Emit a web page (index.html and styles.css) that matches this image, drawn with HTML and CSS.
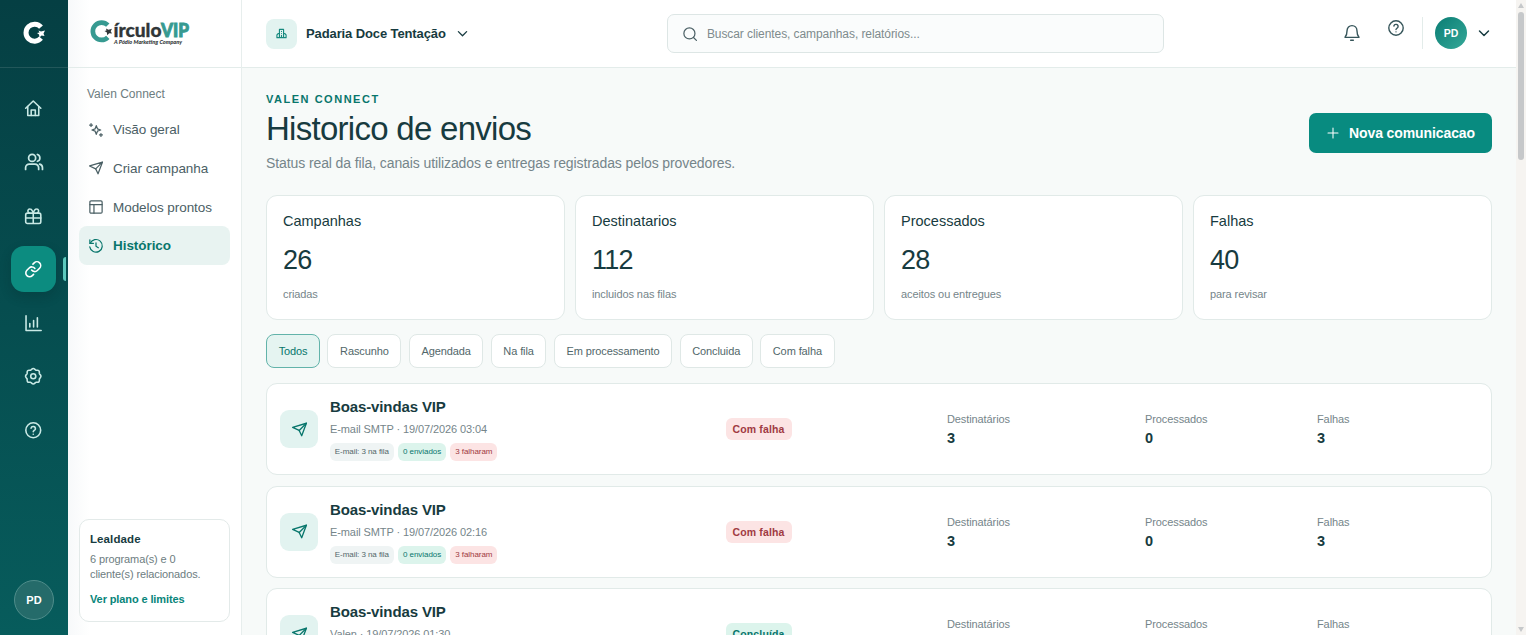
FILE: index.html
```html
<!DOCTYPE html>
<html lang="pt-BR">
<head>
    <meta charset="UTF-8">
    <title>Historico de envios</title>
    <link rel="stylesheet" href="styles.css">
</head>
<body>
    <!-- shared icons -->
    <svg class="sprite" aria-hidden="true">
        <symbol id="i-send" viewBox="0 0 24 24"><path d="M23 2 15.500 22l-4-8.500-10.500-5Z"/><path d="M23 2 11.500 13.500"/></symbol>
        <symbol id="i-help" viewBox="0 0 24 24"><circle cx="12" cy="12" r="10.800"/><path d="M8.800 9a3.200 3.200 0 0 1 6.300 1c0 2-3.100 2.600-3.100 4.200"/><path d="M12 17.800h.01"/></symbol>
        <symbol id="i-chevron" viewBox="0 0 24 24"><path d="m3 8 9 9 9-9"/></symbol>
    </svg>

    <aside class="rail">
        <div class="rail-logo">
            <svg width="24" height="24" viewBox="0 0 24 24" fill="none">
                <path d="M19 6.200A8.500 8.500 0 1 0 19 17.200" stroke="#fff" stroke-width="5"/>
                <path d="m16.500 9.500 2.500 1 4-1-1.500 3 1 2.500-3-.5-2 2-.5-3-2-1.500 2.500-.5Z" fill="#fff"/>
            </svg>
        </div>
        <nav class="rail-nav">
            <a class="rail-item"><svg class="icon" viewBox="0 0 24 24"><path d="M1 12 12 1.500 23 12"/><path d="M4 9.500V22.500h16V9.500"/><path d="M9 22.500V14.500h6v8"/></svg></a>
            <a class="rail-item"><svg class="icon wide" viewBox="0 0 24 24"><circle cx="9.500" cy="6.500" r="4.700"/><path d="M.8 22v-2.300A5 5 0 0 1 5.800 14.700h7.400a5 5 0 0 1 5 5v2.300"/><path d="M16.500 2a4.700 4.700 0 0 1 0 9"/><path d="M19.500 14.900a5 5 0 0 1 3.800 4.800v2.300"/></svg></a>
            <a class="rail-item"><svg class="icon" viewBox="0 0 24 24"><rect x="1" y="7.500" width="22" height="15" rx="2.500"/><path d="M1 14.500h22M12 7.500V22"/><path d="M12 7.500C11 4 9.500 1.500 7.300 1.500a2.900 2.900 0 0 0-1.500 5.500M12 7.500C13 4 14.500 1.500 16.700 1.500a2.900 2.900 0 0 1 1.500 5.500"/></svg></a>
            <a class="rail-item active"><svg class="icon" viewBox="0 0 24 24"><path d="M9.600 13.200a5.500 5.500 0 0 0 8.300.6l3.300-3.300a5.500 5.500 0 0 0-7.800-7.800l-1.900 1.900"/><path d="M14.400 10.800a5.500 5.500 0 0 0-8.300-.6l-3.300 3.300a5.500 5.500 0 0 0 7.800 7.800l1.900-1.900"/></svg></a>
            <a class="rail-item"><svg class="icon" viewBox="0 0 24 24"><path d="M1.500 1v21.500H23.500"/><path d="M7 17.500v-5M12.500 17.500V8M18 17.500V4"/></svg></a>
            <a class="rail-item"><svg class="icon" viewBox="0 0 24 24"><path d="M12 .8c1.900 0 2.400 1.800 3.900 2.400 1.500.5 3-.5 4.300.8s.3 2.800.8 4.300c.6 1.400 2.200 1.800 2.200 3.700s-1.600 2.400-2.200 3.800c-.5 1.500.5 3-.8 4.300s-2.800.3-4.300.8c-1.500.6-2 2.400-3.900 2.400s-2.400-1.800-3.900-2.400c-1.500-.5-3 .5-4.300-.8s-.3-2.800-.8-4.300C2.400 14.400.8 13.900.8 12s1.600-2.300 2.200-3.700c.5-1.500-.5-3 .8-4.300s2.800-.3 4.300-.8C9.600 2.600 10.100.8 12 .8Z"/><circle cx="12" cy="12" r="3.700"/></svg></a>
            <a class="rail-item"><svg class="icon"><use href="#i-help"/></svg></a>
        </nav>
        <div class="rail-avatar">PD</div>
    </aside>

    <aside class="sidebar">
        <div class="brand">
            <svg width="102" height="30" viewBox="0 0 102 30">
                <path d="M18.800 6.200A8.700 8.700 0 1 0 18.800 18.300" fill="none" stroke="#379a91" stroke-width="4.700"/>
                <path d="m17 9.500 2.500 1.200 3.500-1-1.300 2.600 1.300 2.200-2.800-.3-2 2-.3-2.800-2.400-1.400 2-.6Z" fill="#303638"/>
                <text class="brand-dark" x="24.500" y="18" textLength="48" lengthAdjust="spacingAndGlyphs">írculo</text>
                <text class="brand-vip" x="72" y="18" textLength="28" lengthAdjust="spacingAndGlyphs">VIP</text>
                <text class="brand-tag" x="25" y="25" textLength="68" lengthAdjust="spacingAndGlyphs">A Pódio Marketing Company</text>
            </svg>
        </div>
        <div class="menu">
            <div class="menu-title">Valen Connect</div>
            <a class="menu-item"><svg class="icon" viewBox="0 0 24 24"><path d="m12.500 4.500 2 5.500 5.500 2-5.500 2-2 5.500-2-5.500L5 12l5.500-2Z"/><path d="M3.500 1v5M1 3.500h5M20.500 18v5M18 20.500h5"/></svg>Visão geral</a>
            <a class="menu-item"><svg class="icon"><use href="#i-send"/></svg>Criar campanha</a>
            <a class="menu-item"><svg class="icon" viewBox="0 0 24 24"><rect x="1.500" y="1.500" width="21" height="21" rx="2"/><path d="M1.500 8h21M8.500 8v14.500"/></svg>Modelos prontos</a>
            <a class="menu-item active"><svg class="icon" viewBox="0 0 24 24"><path d="M1.500 1.500V7.500h6"/><path d="M2 7.500A10.800 10.800 0 1 1 1.300 13.500"/><path d="M12 6.500v6l4 2.500"/></svg>Histórico</a>
        </div>
        <div class="plan">
            <div class="plan-title">Lealdade</div>
            <div class="plan-text">6 programa(s) e 0 cliente(s) relacionados.</div>
            <a class="plan-link">Ver plano e limites</a>
        </div>
    </aside>

    <div class="page">
        <header class="topbar">
            <div class="company">
                <span class="company-icon"><svg class="icon" viewBox="0 0 24 24"><path d="M7.500 21V3h9v18M7.500 12H5l-3 3v6h20v-6l-3-3h-2.500M12 7.500v.1M12 12v.1M12 16v5"/></svg></span>
                <span class="company-name">Padaria Doce Tentação</span>
                <svg class="icon chevron"><use href="#i-chevron"/></svg>
            </div>
            <div class="search">
                <svg class="icon" viewBox="0 0 24 24"><circle cx="11" cy="11" r="9.500"/><path d="m18 18 5 5"/></svg>
                <span>Buscar clientes, campanhas, relatórios...</span>
            </div>
            <div class="actions">
                <svg class="icon bell" viewBox="0 0 24 24"><path d="M1.500 18.500c2.500-2.500 3-5 3-9.500C4.500 4 8 1 12 1s7.500 3 7.500 8c0 4.500.5 7 3 9.500Z"/><path d="M10 22.800h4"/></svg>
                <svg class="icon help"><use href="#i-help"/></svg>
                <div class="user">
                    <span class="user-avatar">PD</span>
                    <svg class="icon"><use href="#i-chevron"/></svg>
                </div>
            </div>
        </header>

        <main class="content">
            <div class="heading">
                <div class="heading-text">
                    <div class="eyebrow">VALEN CONNECT</div>
                    <h1>Historico de envios</h1>
                    <p>Status real da fila, canais utilizados e entregas registradas pelos provedores.</p>
                </div>
                <button class="btn-new"><svg class="icon" viewBox="0 0 24 24"><path d="M12 2v20M2 12h20"/></svg>Nova comunicacao</button>
            </div>

            <section class="stats">
                <div class="stat"><span>Campanhas</span><strong>26</strong><small>criadas</small></div>
                <div class="stat"><span>Destinatarios</span><strong>112</strong><small>incluidos nas filas</small></div>
                <div class="stat"><span>Processados</span><strong>28</strong><small>aceitos ou entregues</small></div>
                <div class="stat"><span>Falhas</span><strong>40</strong><small>para revisar</small></div>
            </section>

            <div class="filters">
                <button class="filter active">Todos</button>
                <button class="filter">Rascunho</button>
                <button class="filter">Agendada</button>
                <button class="filter">Na fila</button>
                <button class="filter">Em processamento</button>
                <button class="filter">Concluida</button>
                <button class="filter">Com falha</button>
            </div>

            <section class="list">
                <article class="row">
                    <div class="row-icon"><svg class="icon"><use href="#i-send"/></svg></div>
                    <div class="row-info">
                        <h3>Boas-vindas VIP</h3>
                        <p>E-mail SMTP · 19/07/2026 03:04</p>
                        <div class="tags"><span class="tag">E-mail: 3 na fila</span><span class="tag ok">0 enviados</span><span class="tag error">3 falharam</span></div>
                    </div>
                    <div><span class="status error">Com falha</span></div>
                    <div class="metric"><span>Destinatários</span><strong>3</strong></div>
                    <div class="metric"><span>Processados</span><strong>0</strong></div>
                    <div class="metric"><span>Falhas</span><strong>3</strong></div>
                </article>
                <article class="row">
                    <div class="row-icon"><svg class="icon"><use href="#i-send"/></svg></div>
                    <div class="row-info">
                        <h3>Boas-vindas VIP</h3>
                        <p>E-mail SMTP · 19/07/2026 02:16</p>
                        <div class="tags"><span class="tag">E-mail: 3 na fila</span><span class="tag ok">0 enviados</span><span class="tag error">3 falharam</span></div>
                    </div>
                    <div><span class="status error">Com falha</span></div>
                    <div class="metric"><span>Destinatários</span><strong>3</strong></div>
                    <div class="metric"><span>Processados</span><strong>0</strong></div>
                    <div class="metric"><span>Falhas</span><strong>3</strong></div>
                </article>
                <article class="row">
                    <div class="row-icon"><svg class="icon"><use href="#i-send"/></svg></div>
                    <div class="row-info">
                        <h3>Boas-vindas VIP</h3>
                        <p>Valen · 19/07/2026 01:30</p>
                        <div class="tags"><span class="tag ok">1 enviados</span></div>
                    </div>
                    <div><span class="status ok">Concluída</span></div>
                    <div class="metric"><span>Destinatários</span><strong>1</strong></div>
                    <div class="metric"><span>Processados</span><strong>1</strong></div>
                    <div class="metric"><span>Falhas</span><strong>0</strong></div>
                </article>
            </section>
        </main>
    </div>

    <div class="scrollbar">
        <span class="arrow up"></span>
        <span class="thumb"></span>
        <span class="arrow down"></span>
    </div>
</body>
</html>
```
FILE: styles.css
```css
* {
    box-sizing: border-box;
}
body {
    display: flex;
    height: 100vh;
    margin: 0;
    overflow: hidden;
    font-family: "Liberation Sans", Arial, sans-serif;
    color: #173b40;
    background-color: #f7faf9;
}
h1, h3, p {
    margin: 0;
}
button {
    font-family: inherit;
}
.sprite {
    display: none;
}
.icon {
    width: 16px;
    height: 16px;
    flex: none;
    overflow: visible;
    fill: none;
    stroke: currentColor;
    stroke-width: 2.100;
    stroke-linecap: round;
    stroke-linejoin: round;
}
symbol {
    overflow: visible;
}

/* rail */
.rail {
    display: flex;
    flex-direction: column;
    align-items: center;
    width: 68px;
    flex: none;
    padding-bottom: 15px;
    background: linear-gradient(#053f43, #075c5c);
}
.rail-logo {
    display: flex;
    align-items: center;
    justify-content: center;
    width: 100%;
    height: 68px;
    padding: 0 1px 1px 0;
    border-bottom: 1px solid #22575a;
}
.rail-nav {
    display: flex;
    flex-direction: column;
    gap: 7.600px;
    margin: 17.600px 1px 0 0;
}
.rail-item {
    display: flex;
    align-items: center;
    justify-content: center;
    position: relative;
    width: 45px;
    height: 46px;
    border-radius: 13px;
    color: #c9e9e5;
}
.rail-item .icon {
    width: 16.500px;
    height: 16.500px;
    stroke-width: 2.300;
}
.rail-item .icon.wide {
    width: 18px;
    height: 18px;
}
.rail-item.active {
    color: #fff;
    background-color: #0c8c80;
    box-shadow: 0 5px 12px rgba(0, 30, 30, 0.2);
}
.rail-item.active::after {
    content: "";
    position: absolute;
    top: 11px;
    right: -10px;
    width: 3px;
    height: 24px;
    border-radius: 3px 0 0 3px;
    background-color: #5cc9bd;
}
.rail-avatar {
    width: 40px;
    height: 40px;
    margin-top: auto;
    border: 1px solid #4f8d8b;
    border-radius: 50%;
    background-color: #256b6a;
    color: #fff;
    font-size: 11px;
    font-weight: bold;
    line-height: 38px;
    text-align: center;
}

/* sidebar */
.sidebar {
    display: flex;
    flex-direction: column;
    width: 174px;
    flex: none;
    padding-bottom: 13.500px;
    border-right: 1px solid #e7eeed;
    background: linear-gradient(90deg, #f7f9fa, #fff 22px);
}
.brand {
    height: 68px;
    padding: 19px 0 0 21px;
    border-bottom: 1px solid #e3ecea;
}
.brand-dark, .brand-vip {
    font-family: Lato, sans-serif;
    font-weight: 900;
    font-size: 18px;
    fill: #303638;
    stroke: #303638;
    stroke-width: 0.300px;
}
.brand-vip {
    fill: #379a91;
    stroke: #379a91;
    stroke-width: 0.900px;
}
.brand-tag {
    font-family: Lato, sans-serif;
    font-style: italic;
    font-weight: 900;
    font-size: 5.500px;
    fill: #303638;
}
.menu {
    padding: 19px 11px 0;
}
.menu-title {
    margin-bottom: 9.300px;
    padding-left: 8px;
    font-size: 12px;
    line-height: 14px;
    color: #6d7d7f;
}
.menu-item {
    display: flex;
    align-items: center;
    gap: 10px;
    height: 38.700px;
    padding-left: 10px;
    border-radius: 8px;
    font-size: 13.500px;
    letter-spacing: -0.060px;
    color: #4b6065;
}
.menu-item .icon {
    width: 14px;
    height: 14px;
}
.menu-item.active {
    background-color: #e8f3f1;
    color: #08766c;
    font-weight: bold;
}
.plan {
    height: 102.500px;
    margin: auto 11px 0;
    padding: 12px 10px;
    border: 1px solid #e3eae9;
    border-radius: 10px;
    background-color: #fff;
    font-size: 11px;
    letter-spacing: -0.110px;
}
.plan-title {
    font-size: 11.500px;
    font-weight: bold;
    letter-spacing: 0.100px;
    line-height: 14px;
}
.plan-text {
    margin-top: 6px;
    line-height: 15px;
    color: #6d7d7f;
}
.plan-link {
    display: block;
    margin-top: 10px;
    font-weight: bold;
    line-height: 14px;
    color: #08857a;
}

/* topbar */
.page {
    flex: 1;
    min-width: 0;
}
.topbar {
    display: grid;
    grid-template-columns: 401.400px 497px 1fr;
    height: 68px;
    padding: 0 24px;
    border-bottom: 1px solid #e3ecea;
    background-color: #fff;
}
.company {
    display: flex;
    align-items: center;
}
.company-icon {
    display: flex;
    align-items: center;
    justify-content: center;
    width: 31px;
    height: 30px;
    border-radius: 8px;
    background-color: #e2f3f0;
    color: #16897e;
}
.company-icon .icon {
    width: 11px;
    height: 11px;
    stroke-width: 2.500;
}
.company-name {
    margin: 0 11px 0 9px;
    font-size: 13px;
    font-weight: bold;
    letter-spacing: -0.110px;
}
.chevron {
    width: 11px;
    height: 11px;
    stroke-width: 2.800;
}
.search {
    display: flex;
    align-items: center;
    align-self: center;
    gap: 10px;
    height: 39px;
    padding-left: 14.500px;
    border: 1px solid #dde6e5;
    border-radius: 7px;
    background-color: #fafcfc;
    font-size: 12px;
    letter-spacing: -0.080px;
    color: #7e8b8d;
}
.search .icon {
    width: 14px;
    height: 14px;
    color: #4b6065;
}
.actions {
    display: flex;
    align-items: center;
    justify-content: flex-end;
    color: #36555a;
}
.actions .icon {
    width: 16px;
    height: 16px;
}
.actions .bell {
    margin-bottom: 2px;
}
.actions .help {
    margin: 0 18px 11px 28px;
}
.user {
    display: flex;
    align-items: center;
    gap: 11px;
    height: 32px;
    margin-bottom: 1px;
    padding: 0 2px 0 12px;
    border-left: 1px solid #e3ecea;
}
.actions .user .icon {
    width: 12px;
    height: 12px;
    stroke-width: 2.900;
    color: #173b40;
}
.user-avatar {
    width: 32px;
    height: 32px;
    border-radius: 50%;
    background: linear-gradient(135deg, #0a7d74, #35a898);
    color: #fff;
    font-size: 10.500px;
    font-weight: bold;
    line-height: 32px;
    text-align: center;
}

/* content */
.content {
    padding: 24px 24px 0;
}
.heading {
    display: flex;
    align-items: center;
    justify-content: space-between;
    height: 84px;
    margin-bottom: 19px;
}
.heading-text {
    align-self: flex-start;
}
.eyebrow {
    font-size: 11px;
    font-weight: bold;
    letter-spacing: 1.520px;
    line-height: 14px;
    color: #08766c;
}
h1 {
    margin-top: 3px;
    font-size: 33px;
    font-weight: normal;
    letter-spacing: -0.720px;
    line-height: 40px;
}
.heading p {
    margin-top: 5px;
    font-size: 14px;
    letter-spacing: -0.100px;
    line-height: 18px;
    color: #75858a;
}
.btn-new {
    display: flex;
    align-items: center;
    justify-content: center;
    gap: 10px;
    width: 183px;
    height: 40px;
    margin-top: -3px;
    padding: 0 0 0 1px;
    border: 0;
    border-radius: 7px;
    background-color: #088b80;
    color: #fff;
    font-size: 14px;
    font-weight: bold;
    letter-spacing: -0.100px;
}
.btn-new .icon {
    width: 12px;
    height: 12px;
}
.stats {
    display: grid;
    grid-template-columns: repeat(4, 1fr);
    gap: 10px;
}
.stat {
    display: flex;
    flex-direction: column;
    height: 125px;
    padding: 16px;
    border: 1px solid #e1eae8;
    border-radius: 11px;
    background-color: #fff;
}
.stat span {
    font-size: 14.500px;
    line-height: 18px;
}
.stat strong {
    margin: 15px 0 13px;
    font-size: 27px;
    font-weight: normal;
    letter-spacing: -0.800px;
    line-height: 30px;
}
.stat small {
    font-size: 11px;
    letter-spacing: -0.100px;
    line-height: 12px;
    color: #75858a;
}
.filters {
    display: flex;
    gap: 7.300px;
    margin: 14px 0 15px;
}
.filter {
    height: 34px;
    padding: 0 11.650px;
    border: 1px solid #dfe8e6;
    border-radius: 8px;
    background-color: #fff;
    font-size: 11px;
    letter-spacing: -0.100px;
    color: #52676a;
}
.filter.active {
    border-color: #62b3aa;
    background-color: #e5f4f1;
    color: #08766c;
}

/* campaign rows */
.list {
    display: flex;
    flex-direction: column;
    gap: 10.500px;
}
.row {
    display: grid;
    grid-template-columns: 38.500px 383.500px 209.500px 186px 160px 1fr;
    gap: 12px;
    align-items: center;
    height: 92px;
    padding: 0 12.500px;
    border: 1px solid #e1eae8;
    border-radius: 11px;
    background-color: #fff;
}
.row-icon {
    display: flex;
    align-items: center;
    justify-content: center;
    height: 38px;
    padding-left: 1px;
    border-radius: 9px;
    background-color: #e2f3f0;
    color: #08766c;
}
.row-icon .icon {
    width: 15px;
    height: 15px;
}
.row-info {
    padding-top: 1px;
}
.row-info h3 {
    font-size: 15px;
    letter-spacing: -0.120px;
    line-height: 18px;
}
.row-info p {
    margin: 6px 0 7px;
    font-size: 11px;
    letter-spacing: -0.100px;
    line-height: 14px;
    color: #75858a;
}
.tags {
    display: flex;
    gap: 4.500px;
}
.tag {
    height: 18px;
    padding: 0 4.800px;
    border-radius: 6px;
    background-color: #eff4f4;
    font-size: 8px;
    letter-spacing: -0.060px;
    line-height: 18px;
    color: #52676a;
}
.status {
    display: inline-block;
    padding: 0 7px;
    border-radius: 6px;
    font-size: 10.500px;
    font-weight: bold;
    letter-spacing: 0.150px;
    line-height: 22px;
}
.ok {
    background-color: #dcf4ec;
    color: #08766c;
}
.error {
    background-color: #fce4e4;
    color: #a03a42;
}
.metric span, .metric strong {
    display: block;
}
.metric span {
    font-size: 11px;
    letter-spacing: -0.100px;
    line-height: 14px;
    color: #75858a;
}
.metric strong {
    margin-top: 4px;
    font-size: 14.500px;
    line-height: 16px;
}

/* scrollbar */
.scrollbar {
    display: flex;
    flex-direction: column;
    align-items: center;
    width: 10px;
    padding: 3px 0;
    background-color: #f6f4f1;
}
.thumb {
    width: 6px;
    height: 148px;
    margin-top: 4px;
    border-radius: 3px;
    background-color: #c6c8ca;
}
.arrow {
    border: 3.500px solid transparent;
}
.arrow.up {
    border-top: 0;
    border-bottom: 5px solid #c6c8ca;
}
.arrow.down {
    margin-top: auto;
    border-top: 5px solid #c6c8ca;
    border-bottom: 0;
}
```
